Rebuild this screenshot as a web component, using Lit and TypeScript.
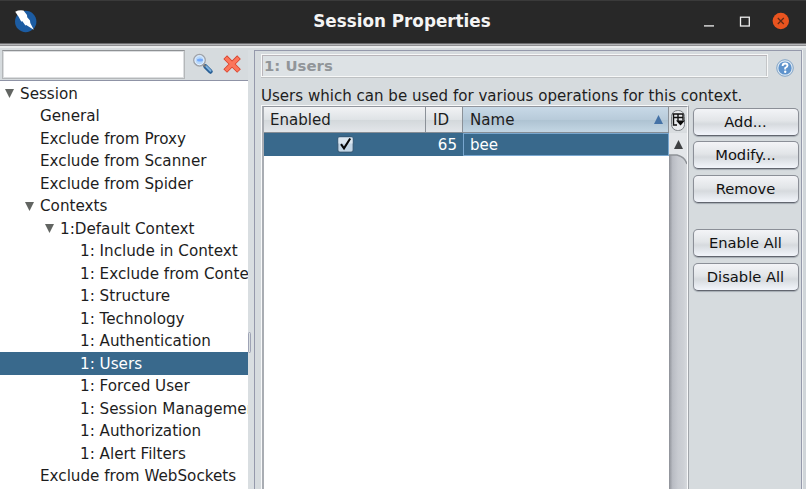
import { LitElement, html, css, svg } from "lit";
import { customElement, property } from "lit/decorators.js";
import { classMap } from "lit/directives/class-map.js";

interface TreeNode {
  label: string;
  level: number;
  open?: boolean;
  selected?: boolean;
}

const NODES: TreeNode[] = [
  { label: "Session", level: 0, open: true },
  { label: "General", level: 1 },
  { label: "Exclude from Proxy", level: 1 },
  { label: "Exclude from Scanner", level: 1 },
  { label: "Exclude from Spider", level: 1 },
  { label: "Contexts", level: 1, open: true },
  { label: "1:Default Context", level: 2, open: true },
  { label: "1: Include in Context", level: 3 },
  { label: "1: Exclude from Context", level: 3 },
  { label: "1: Structure", level: 3 },
  { label: "1: Technology", level: 3 },
  { label: "1: Authentication", level: 3 },
  { label: "1: Users", level: 3, selected: true },
  { label: "1: Forced User", level: 3 },
  { label: "1: Session Management", level: 3 },
  { label: "1: Authorization", level: 3 },
  { label: "1: Alert Filters", level: 3 },
  { label: "Exclude from WebSockets", level: 1 },
];

@customElement("title-bar")
export class TitleBar extends LitElement {
  static styles = css`
    :host {
      display: flex;
      align-items: center;
      height: 43px;
      box-sizing: border-box;
      background: #282828;
      border-top: 1px solid #3a3a3a;
      padding: 0 15px 2px 13px;
      color: #f4f4f4;
    }
    .logo { width: 26px; height: 26px; }
    .title {
      flex: 1;
      text-align: center;
      font: bold 16.8px/24px "DejaVu Sans", sans-serif;
      padding: 0 0 1px 66px;
      white-space: nowrap;
    }
    .controls { width: 92px; height: 24px; }
    svg { display: block; }
  `;
  render() {
    return html`
      <svg class="logo" viewBox="0 0 26 26">
        <circle cx="12.7" cy="13.5" r="10.7" fill="#1c5ca2" />
        <path d="M2.2 3.8Q6 1.8 10.5 2.6L14 7 14.2 9.2 17 12.5 17.3 15 20.8 21.8 13.2 17 12.4 17.4 9.4 13.2 8.2 13.4 5.6 8.8z" fill="#fff" />
      </svg>
      <div class="title">Session Properties</div>
      <svg class="controls" viewBox="0 0 92 24">
        <path d="M5 16.9h10" stroke="#eee" stroke-width="1.3" />
        <rect x="41.5" y="8.2" width="8.8" height="8.8" fill="none" stroke="#eee" stroke-width="1.3" />
        <circle cx="81.8" cy="12" r="8.2" fill="#e9541f" />
        <path d="M78.8 9l6 6M84.8 9l-6 6" stroke="#5d2a17" stroke-width="1.2" />
      </svg>
    `;
  }
}

@customElement("session-tree")
export class SessionTree extends LitElement {
  static styles = css`
    :host {
      display: block;
      flex: 1;
      background: #fff;
      border-top: 1px solid #8f93a6;
      overflow: hidden;
      padding-top: 1.3px;
      font-size: 15.18px;
    }
    .row {
      display: flex;
      height: 22.53px;
      align-items: center;
      white-space: nowrap;
      color: #1d1d1d;
    }
    .level-0 { padding-left: 5px; }
    .level-1 { padding-left: 25px; }
    .level-2 { padding-left: 45px; }
    .level-3 { padding-left: 65px; }
    .selected { background: #39698c; color: #fff; }
    .toggle { width: 9px; height: 9px; margin-right: 6px; flex: none; }
  `;
  render() {
    return NODES.map(
      (n) => html`<div class=${classMap({ row: true, ["level-" + n.level]: true, selected: !!n.selected })}>
        <svg class="toggle" viewBox="0 0 9 9">
          ${n.open ? svg`<path d="M0 0h9L4.5 9z" fill="#626562" />` : ""}
        </svg>
        <span>${n.label}</span>
      </div>`
    );
  }
}

@customElement("push-button")
export class PushButton extends LitElement {
  @property() label = "";
  static styles = css`
    :host { display: block; font-size: 14.7px; }
    button {
      display: block;
      width: 106px;
      height: 28px;
      padding: 0 1px 0 0;
      border: 1px solid #8b8f97;
      border-bottom-color: #62666f;
      border-radius: 5px;
      background: linear-gradient(#f3f4f7 0, #e2e5e8 45%, #d6dade 58%, #f2f5fb 100%);
      box-shadow: 0 1px 1px #a5abb2;
      font: inherit;
      color: #111;
      white-space: nowrap;
    }
  `;
  render() {
    return html`<button>${this.label}</button>`;
  }
}

@customElement("users-table")
export class UsersTable extends LitElement {
  static styles = css`
    :host {
      display: flex;
      width: 428px;
      box-sizing: border-box;
      border: solid #f8f9fa;
      border-width: 1px 1px 0 1px;
      border-right-color: #a2a6ab;
    }
    .box {
      display: flex;
      flex: 1;
      border: solid #91959c;
      border-width: 1px 0 0 2px;
      border-left-color: #a9adb3;
      border-right: 1px solid #f8f9fa;
    }
    .grid { width: 405px; background: #fff; }
    .line { display: grid; grid-template-columns: 162px 37px 1fr; }
    .head {
      height: 26px;
      box-sizing: border-box;
      border-bottom: 1px solid #858d95;
      line-height: 26px;
      background: linear-gradient(#f2f3f5, #dfe3e6 50%, #d3d8db 52%, #e3e6ea);
    }
    .head span { padding-left: 6px; border-right: 1px solid #8b9198; height: 25px; }
    .head span + span { padding-left: 7px; }
    .head .sorted {
      display: flex;
      justify-content: space-between;
      align-items: center;
      padding-right: 5px;
      background: linear-gradient(#c8d9e7, #b8cbda 50%, #aec3d2 53%, #c3d6e4);
    }
    .body { height: 23px; background: #39698c; color: #fff; line-height: 25px; }
    .mark { display: flex; justify-content: center; align-items: center; height: 23px; }
    .id { text-align: right; padding-right: 6px; height: 23px; }
    .name { padding-left: 6px; border: 1px solid #79a7cf; line-height: 23px; height: 21px; }
    .arrow { width: 9px; height: 9px; }
    .check { width: 17px; height: 17px; }
    .bar { width: 18px; background: linear-gradient(90deg, #8d9097 0, #b9bcc3 20%, #c8cbd1 50%, #cdd0d5 80%, #d6d9dd); }
    .corner { display: block; width: 18px; height: 60px; }
  `;
  render() {
    return html`<div class="box">
      <div class="grid">
        <div class="line head">
          <span>Enabled</span><span>ID</span>
          <span class="sorted">Name<svg class="arrow" viewBox="0 0 9 9"><path d="M4.5 0 9 9H0z" fill="#4472a6" /></svg></span>
        </div>
        <div class="line body">
          <div class="mark">
            <svg class="check" viewBox="0 0 17 17">
              <rect x=".9" y=".9" width="15.2" height="15.2" rx="2" fill="#c3d6e6" stroke="#35526c" stroke-width=".9" />
              <path d="M1.5 1.5h14v6h-14z" fill="#dce7f0" />
              <path d="M4 8.2 7 12.3 13.2 2.5" fill="none" stroke="#080808" stroke-width="2.1" />
            </svg>
          </div>
          <div class="id">65</div>
          <div class="name">bee</div>
        </div>
      </div>
      <div class="bar">
        <svg class="corner" viewBox="0 0 18 60">
          <rect width="18" height="26" fill="#d9dde0" />
          <rect x="2.5" y="3.5" width="13" height="20" rx="6" fill="#e9ebee" stroke="#7b8085" />
          <path d="M3.5 7h11M4.5 6.5v11.5h3.5M4 10.5h10.5M9 6.5v7.5M14 6.5v7" fill="none" stroke="#111" stroke-width="1.4" />
          <path d="M7 13.5h9l-4.5 5z" fill="#080808" />
          <path d="M0 26h18v31q-2-7-10-9H0z" fill="#e3e6e9" />
          <path d="M0 48h8q8 2 10 9" fill="none" stroke="#8e9297" stroke-width="1.4" />
          <path d="M5 42h9L9.5 33z" fill="#3f4143" />
        </svg>
      </div>
    </div>`;
  }
}

@customElement("app-root")
export class AppRoot extends LitElement {
  static styles = css`
    :host {
      display: flex;
      flex-direction: column;
      width: 806px;
      height: 489px;
      overflow: hidden;
      background: #d6dbde;
      font: 15.06px/22px "DejaVu Sans", sans-serif;
      color: #1d1d1d;
    }
    .edge {
      height: 7px;
      flex: none;
      background: linear-gradient(#6c6c6e 0 1px, #b5b6b8 1px 2px, #8f8f92 2px 3px, #e9ebec 3px 5px, #d6dbde 5px);
    }
    .main { display: flex; flex: 1; min-height: 0; }
    .left { width: 248px; display: flex; flex-direction: column; min-height: 0; }
    .search { display: flex; align-items: flex-start; height: 30px; padding-left: 2px; }
    .search input {
      width: 183px;
      height: 29px;
      box-sizing: border-box;
      border: 1px solid #b4b7b9;
      border-top-color: #8e9194;
      box-shadow: inset 0 0 0 1px #dcdee0;
      background: #fff;
      outline: none;
      padding: 0 3px;
    }
    .glass { width: 22px; height: 22px; margin: 3px 0 0 7px; }
    .cross { width: 20px; height: 20px; margin: 4px 0 0 8px; }
    .divider { width: 6px; display: flex; flex-direction: column; background: #d9dee1; }
    .grip {
      width: 3px;
      height: 21px;
      margin-top: 282px;
      border: 1px solid #9ea3b5;
      border-radius: 2px;
      box-sizing: border-box;
    }
    .panel {
      width: 548px;
      box-sizing: border-box;
      border: solid #9599ab;
      border-width: 1px 1px 0 1px;
      display: flex;
      flex-direction: column;
      padding: 3px 3px 0 6px;
    }
    .rim { flex: 1; border-left: 1px solid #eef0f1; background: #d0d5d9; }
    .heading { display: flex; align-items: center; }
    .caption {
      width: 507px;
      height: 23px;
      box-sizing: border-box;
      border: 1px solid #f7f8f8;
      box-shadow: inset 1px 1px #b9b5ba, inset -1px 0 #c4c6c8, 0 1px #bec1c3;
      background: #dde2e5;
      color: #919599;
      font: bold 14.9px/23px "DejaVu Sans", sans-serif;
      padding-left: 2px;
    }
    .help { width: 18px; height: 18px; margin: 4px 0 0 8px; }
    .note { height: 28px; line-height: 38px; white-space: nowrap; }
    .content { display: flex; flex: 1; gap: 4px; }
    .buttons { display: flex; flex-direction: column; gap: 5.8px; padding-top: 2.6px; }
    .later { margin-top: 20px; }
  `;
  render() {
    return html`
      <title-bar></title-bar>
      <div class="edge"></div>
      <div class="main">
        <div class="left">
          <div class="search">
            <input aria-label="Search" />
            <svg class="glass" viewBox="0 0 22 22">
              <path d="M13.5 13.5l5 5" stroke="#285f96" stroke-width="4.5" stroke-linecap="round" />
              <path d="M14 13.3l4.5 4.5" stroke="#7db1dd" stroke-width="2" stroke-linecap="round" />
              <path d="M11 11l2.5 2.5" stroke="#777" stroke-width="2" />
              <circle cx="7.5" cy="7.2" r="5.7" fill="#b9d9fb" stroke="#a0a3a8" stroke-width="1.5" />
              <circle cx="7.5" cy="7.2" r="4.5" fill="none" stroke="#e8f2ff" stroke-width="1" />
              <ellipse cx="8" cy="7" rx="3" ry="1.5" fill="#76a9fa" />
            </svg>
            <svg class="cross" viewBox="0 0 20 20">
              <path d="M3.2 3.2 17 17M17 3.2 3.2 17" stroke="#d8432d" stroke-width="5.2" />
              <path d="M3.7 3.7 16.5 16.5M16.5 3.7 3.7 16.5" stroke="#fb765b" stroke-width="3.6" />
            </svg>
          </div>
          <session-tree></session-tree>
        </div>
        <div class="divider"><div class="grip"></div></div>
        <div class="panel">
          <div class="heading">
            <div class="caption">1: Users</div>
            <svg class="help" viewBox="0 0 18 18">
              <circle cx="9" cy="9" r="8.3" fill="#d9e6f2" stroke="#84a5c7" />
              <circle cx="9" cy="9" r="6.6" fill="#5f93cc" />
              <path d="M6.6 7q0-2.5 2.5-2.5 2.4 0 2.4 2.1Q11.5 8 9.2 9v1.5" fill="none" stroke="#fff" stroke-width="1.9" />
              <circle cx="9.2" cy="12.8" r="1.2" fill="#fff" />
            </svg>
          </div>
          <div class="note">Users which can be used for various operations for this context.</div>
          <div class="content">
            <users-table></users-table>
            <div class="buttons">
              <push-button label="Add..."></push-button>
              <push-button label="Modify..."></push-button>
              <push-button label="Remove"></push-button>
              <push-button class="later" label="Enable All"></push-button>
              <push-button label="Disable All"></push-button>
            </div>
          </div>
        </div>
        <div class="rim"></div>
      </div>
    `;
  }
}
